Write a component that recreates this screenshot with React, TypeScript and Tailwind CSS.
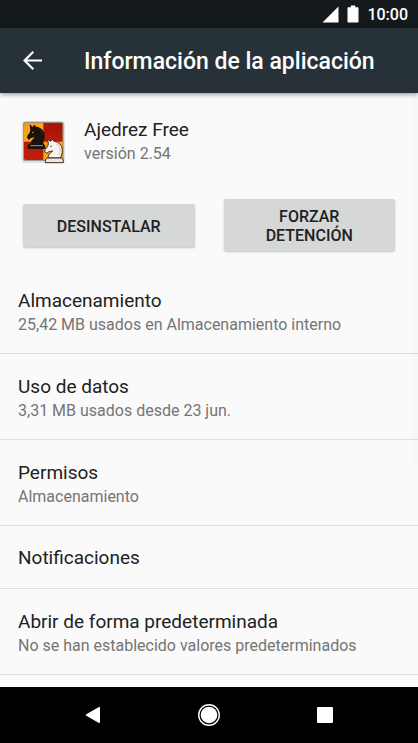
import type { ReactNode } from "react";

type Entry = { title: string; summary?: string };

const entries: Entry[] = [
  { title: "Almacenamiento", summary: "25,42 MB usados en Almacenamiento interno" },
  { title: "Uso de datos", summary: "3,31 MB usados desde 23 jun." },
  { title: "Permisos", summary: "Almacenamiento" },
  { title: "Notificaciones" },
  { title: "Abrir de forma predeterminada", summary: "No se han establecido valores predeterminados" },
];

function StatusBar() {
  return (
    <div className="flex h-7 flex-none items-center justify-end bg-[#14191c] pr-[10px] text-white">
      <svg width="17" height="17" viewBox="0 0 17 17" className="mr-2" fill="currentColor" aria-hidden="true">
        <path d="M16.5 0.5v16H0.5z" />
      </svg>
      <svg width="12" height="18" viewBox="0 0 12 18" className="mr-2" fill="currentColor" aria-hidden="true">
        <path d="M3.8 0.5h4.4v1.8h2.3c.6 0 1 .4 1 1v13.2c0 .6-.4 1-1 1h-9c-.6 0-1-.4-1-1V3.3c0-.6.4-1 1-1h2.3z" />
      </svg>
      <span className="pt-0.5 text-base leading-5 font-medium">10:00</span>
    </div>
  );
}

function AppIcon() {
  return (
    <svg width="46" height="46" viewBox="15 18 138 138" className="flex-none" aria-hidden="true">
      <defs>
        <linearGradient id="orange" x1="0" y1="0" x2="1" y2="1">
          <stop offset="0" stopColor="#f39a12" />
          <stop offset="1" stopColor="#fbb824" />
        </linearGradient>
        <linearGradient id="red" x1="0" y1="0" x2="0" y2="1">
          <stop offset="0" stopColor="#a81408" />
          <stop offset="1" stopColor="#c02008" />
        </linearGradient>
        <clipPath id="board">
          <rect x="27" y="29" width="116" height="112" rx="5" />
        </clipPath>
      </defs>
      <rect x="20" y="24" width="130" height="126" rx="10" fill="#000" opacity=".1" />
      <rect x="24" y="26" width="122" height="118" rx="8" fill="#9d9895" />
      <g clipPath="url(#board)">
        <rect x="27" y="29" width="116" height="112" fill="url(#red)" />
        <rect x="27" y="29" width="58" height="57" fill="url(#orange)" />
        <rect x="85" y="86" width="60" height="56" fill="url(#orange)" />
      </g>
      {/* black knight */}
      <path
        d="M46 94c0-9 6-14 13-21-6 1-9 2-12 3l-5 5-6-6 1-7 7-9 2-8-2-17 9 8 4-7 7 6c14 2 24 11 25 26 1 11-3 18-5 27z"
        fill="#1c120d"
      />
      <path d="M43 92h43l5 6v10H38V98z" fill="#1c120d" />
      <path d="M46 98h38" stroke="#a8937f" strokeWidth="3" />
      <path d="M70 48c8 4 12 11 12 19" fill="none" stroke="#3f2c22" strokeWidth="3" />
      <path d="M51 59l5-2" stroke="#b8a08f" strokeWidth="3" />
      {/* white knight */}
      <path
        d="M99 135c0-10 6-15 14-21-6 1-10 2-13 3l-5 4-6-5 2-7 7-9 2-7-2-14 9 6 4-6 7 6c14 2 23 11 24 26 1 9-3 15-5 24z"
        fill="#f6f2ec"
        stroke="#3b2a22"
        strokeWidth="3"
        strokeLinejoin="round"
      />
      <path d="M97 135h43l5 6v8H91v-8z" fill="#efe8dc" stroke="#3b2a22" strokeWidth="3" strokeLinejoin="round" />
      <path d="M124 93c7 4 12 11 12 19 0 6-3 10-5 14" fill="none" stroke="#ddd5ca" strokeWidth="4" />
      <path d="M106 101l4-2" stroke="#3b2a22" strokeWidth="3" />
    </svg>
  );
}

function ActionButton({ children }: { children: ReactNode }) {
  return (
    <button
      type="button"
      className="flex-1 rounded-[2px] bg-[#d6d7d7] px-6 pt-2 pb-1.5 text-base leading-[19px] font-medium text-[#212121] uppercase shadow-[0_1px_2px_rgba(0,0,0,0.22)] first:pt-[13px] first:pb-[11px]"
    >
      {children}
    </button>
  );
}

function EntryRow({ title, summary }: Entry) {
  return (
    <li className="border-b border-[#dedede]">
      <button type="button" className={summary ? "block w-full px-[18px] pt-[21px] pb-4 text-left" : "block w-full px-[18px] pt-5 pb-[18px] text-left"}>
        <span className="block text-[19px] leading-6 text-[#212121]">{title}</span>
        {summary && <span className="block text-base leading-6 text-[#757575]">{summary}</span>}
      </button>
    </li>
  );
}

function NavigationBar() {
  return (
    <nav className="flex h-14 flex-none items-center justify-center bg-black text-white">
      <button type="button" aria-label="Atrás" className="flex h-full w-[116px] items-center justify-center">
        <svg width="16" height="18" viewBox="0 0 16 18" fill="currentColor">
          <path d="M15 2v14c0 .8-.8 1.2-1.5.8L1.3 9.8c-.7-.4-.7-1.2 0-1.6L13.5 1.2C14.2.8 15 1.2 15 2z" />
        </svg>
      </button>
      <button type="button" aria-label="Inicio" className="flex h-full w-[116px] items-center justify-center">
        <svg width="24" height="24" viewBox="0 0 24 24">
          <circle cx="12" cy="12" r="10.3" fill="none" stroke="currentColor" strokeWidth="1.4" />
          <circle cx="12" cy="12" r="8.3" fill="currentColor" />
        </svg>
      </button>
      <button type="button" aria-label="Recientes" className="flex h-full w-[116px] items-center justify-center">
        <span className="size-4 rounded-[1px] bg-white" />
      </button>
    </nav>
  );
}

export default function App() {
  return (
    <div className="flex h-screen flex-col bg-[#fafafa] font-[Roboto,sans-serif]">
      <StatusBar />
      <header className="z-10 flex h-[65px] flex-none items-center bg-[#273238] pl-[22px] text-white shadow-[0_1px_5px_rgba(0,0,0,0.45)]">
        <button type="button" aria-label="Volver" className="mr-10 flex-none">
          <svg width="22" height="22" viewBox="0 0 22 22" fill="none" stroke="currentColor" strokeWidth="2.2">
            <path d="M20 10.5H3M11.3 1.8L2.6 10.5l8.7 8.7" />
          </svg>
        </button>
        <h1 className="pt-0.5 text-[23px] leading-8 font-medium whitespace-nowrap">Información de la aplicación</h1>
      </header>

      <main className="relative min-h-0 flex-1 overflow-hidden">
        <section className="flex items-end gap-[18px] pt-[25px] pl-5">
          <AppIcon />
          <div>
            <h2 className="text-[19px] leading-6 text-[#212121]">Ajedrez Free</h2>
            <p className="text-base leading-[23px] text-[#757575]">versión 2.54</p>
          </div>
        </section>

        <div className="mt-[34px] flex items-center gap-[29px] px-[23px]">
          <ActionButton>Desinstalar</ActionButton>
          <ActionButton>Forzar detención</ActionButton>
        </div>

        <ul className="mt-[17px]">
          {entries.map((e) => (
            <EntryRow key={e.title} {...e} />
          ))}
        </ul>

        {/* faded scroll thumb */}
        <div className="absolute top-0 right-0 h-[370px] w-[5px] bg-black/1" />
      </main>

      <NavigationBar />
    </div>
  );
}
